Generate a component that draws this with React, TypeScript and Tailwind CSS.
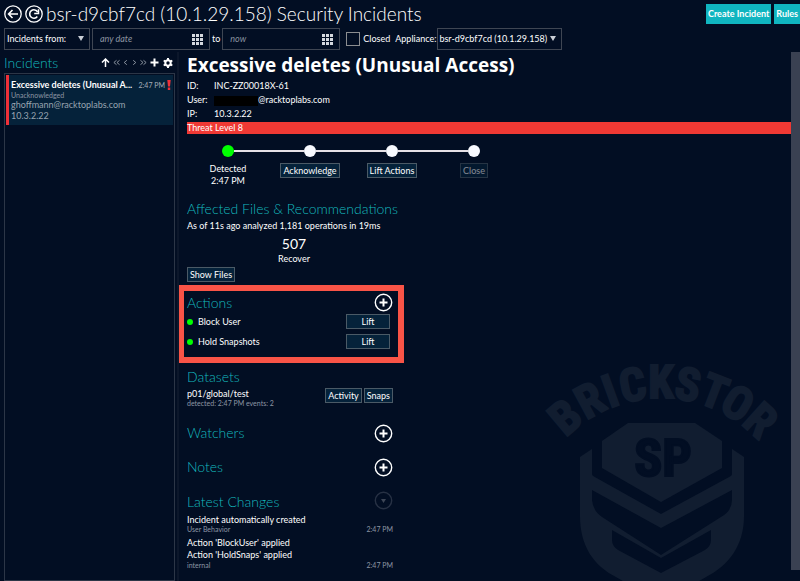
import React from "react";

const button =
  "flex h-[15px] cursor-pointer items-center justify-center whitespace-nowrap border border-[#4b5a66] bg-[#05223a] px-[2px] text-[9px] leading-[12px] text-white";
const heading = "text-[14px] font-light leading-[20px] text-[#14b8be]";
const meta = "text-[7px] leading-[8px] text-[#8d96a3]";

function PlusButton({ label }: { label: string }) {
  return (
    <button type="button" aria-label={label} className="size-[19px] shrink-0 cursor-pointer">
      <svg viewBox="0 0 19 19" className="size-full" fill="none" stroke="#fff">
        <circle cx="9.5" cy="9.5" r="8.2" strokeWidth="1.4" />
        <path d="M9.5 5.5v8M5.5 9.5h8" strokeWidth="2" />
      </svg>
    </button>
  );
}

function Triangle() {
  return (
    <svg viewBox="0 0 6 5" className="pointer-events-none absolute right-[6px] top-2 h-[5px] w-[6px]" fill="#c9ced6">
      <path d="M0 0h6L3 5z" />
    </svg>
  );
}

function DateField({ id, label, placeholder }: { id: string; label: string; placeholder: string }) {
  return (
    <div className="flex h-[22px] w-[118px] items-center border border-[#3f4653] pl-[7px] pr-[6px]">
      <input
        id={id}
        aria-label={label}
        placeholder={placeholder}
        className="w-full min-w-0 flex-1 bg-transparent text-[9px] italic text-white outline-none placeholder:text-[#8b93a0]"
      />
      <svg viewBox="0 0 11 11" className="size-[11px] shrink-0" fill="#d5d9df">
        {[0, 4, 8].map((y) => [0, 4, 8].map((x) => <rect key={`${x}-${y}`} x={x} y={y} width="3" height="3" />))}
      </svg>
    </div>
  );
}

const letters: [string, number][] = [
  ["B", -40], ["R", -28.5], ["I", -20], ["C", -11], ["K", 0], ["S", 10.5], ["T", 21], ["O", 31], ["R", 42],
];

function Watermark() {
  return (
    <svg
      viewBox="0 0 240 221"
      className="pointer-events-none absolute bottom-0 right-[10px] h-[221px] w-[240px] overflow-visible"
      fill="#111d30"
      aria-hidden="true"
    >
      <g fontFamily="'Roboto Condensed', Roboto, sans-serif" fontWeight="700" textAnchor="middle">
        {letters.map(([letter, angle], i) => (
          <text key={i} x="120" y="38" fontSize="46" stroke="#111d30" strokeWidth="2" transform={`rotate(${angle} 120 171)`}>
            {letter}
          </text>
        ))}
        <path d="M87 63h67l27 18v27l-61 34-59-34V81z" />
        <text x="122" y="116" fontSize="52" fill="#020e23" stroke="#020e23" strokeWidth="2">
          SP
        </text>
      </g>
      <path
        fillRule="evenodd"
        d="M39 97l12-8v25q0 1 1 2l68 38 70-38q1-1 1-2V89l12 8v59c0 30-16 50-38 61l-12 7H87l-12-7c-22-11-36-31-36-61z
           M51 130v10q1 11 10 17l59 38 60-38q11-6 11-17v-10l-71 38z
           M71 170v10q0 6 6 10l43 23 44-23q6-4 6-10v-10l-50 28z"
      />
    </svg>
  );
}

function Step({ first, last, done, children }: { first?: boolean; last?: boolean; done?: boolean; children: React.ReactNode }) {
  return (
    <li className="flex w-[82px] flex-col items-center">
      <div className="flex w-full items-center">
        <span className={first ? "h-[2px] flex-1" : "h-[2px] flex-1 bg-[#e6e1e6]"} />
        <span className={done ? "size-3 rounded-full bg-[#00ff00]" : "size-3 rounded-full bg-[#f8faff]"} />
        <span className={last ? "h-[2px] flex-1" : "h-[2px] flex-1 bg-[#e6e1e6]"} />
      </div>
      <div className="mt-[6px] text-center">{children}</div>
    </li>
  );
}

export default function App() {
  return (
    <div className="relative flex h-screen flex-col overflow-hidden bg-[#020e23] font-['Lato','Open_Sans',sans-serif] text-[9px] leading-[12px] text-white">
      <header className="flex h-[28px] shrink-0 items-center">
        <div className="flex items-center gap-[3px] pl-1">
          <button type="button" aria-label="Back" className="size-[18px] cursor-pointer">
            <svg viewBox="0 0 18 18" className="size-full" fill="none" stroke="#fff" strokeWidth="1.3">
              <circle cx="9" cy="9" r="8.2" />
              <path d="M14 9H5M8.5 5L4.6 9l3.9 4" strokeWidth="1.6" />
            </svg>
          </button>
          <button type="button" aria-label="Refresh" className="size-[18px] cursor-pointer">
            <svg viewBox="0 0 18 18" className="size-full" fill="none" stroke="#fff" strokeWidth="1.3">
              <circle cx="9" cy="9" r="8.2" />
              <path d="M12.3 11.5A4.2 4.2 0 1 1 12.6 7" strokeWidth="1.6" />
              <path d="M13.5 4.2v4.2H9.2" strokeWidth="1.5" />
            </svg>
          </button>
        </div>
        <h1 className="ml-[3px] flex-1 whitespace-nowrap text-[19px] font-light leading-[28px]">
          bsr-d9cbf7cd (10.1.29.158) Security Incidents
        </h1>
        <div className="flex gap-[3px]">
          <button type="button" className="h-5 cursor-pointer whitespace-nowrap bg-[#10b5c0] px-[2px] text-[9px] font-bold">
            Create Incident
          </button>
          <button type="button" className="h-5 cursor-pointer bg-[#10b5c0] px-[2px] text-[9px] font-bold">
            Rules
          </button>
        </div>
      </header>

      <div className="flex h-[24px] shrink-0 items-start pl-1">
        <div className="relative">
          <select
            aria-label="Incidents from"
            className="h-[22px] w-[86px] appearance-none border border-[#3f4653] bg-transparent pl-[2px] text-[9px] outline-none"
          >
            <option>Incidents from:</option>
          </select>
          <Triangle />
        </div>
        <div className="ml-[2px]">
          <DateField id="from" label="From date" placeholder="any date" />
        </div>
        <label htmlFor="to" className="px-[2px] leading-[22px]">
          to
        </label>
        <DateField id="to" label="To date" placeholder="now" />
        <label className="ml-[6px] flex items-center gap-[3px] leading-[22px]">
          <input type="checkbox" className="size-[14px] appearance-none border border-[#8b8d90] checked:bg-[#10b5c0]" />
          Closed
        </label>
        <label htmlFor="appliance" className="ml-[5px] mr-[1px] leading-[22px]">
          Appliance:
        </label>
        <div className="relative">
          <select
            id="appliance"
            className="h-[22px] w-[125px] appearance-none border border-[#3f4653] bg-transparent pl-[1px] text-[9px] outline-none"
          >
            <option>bsr-d9cbf7cd (10.1.29.158)</option>
          </select>
          <Triangle />
        </div>
      </div>

      <div className="flex min-h-0 flex-1">
        <aside className="flex w-[179px] shrink-0 flex-col border-r-2 border-[#0c172b] pl-1 pr-[2px]">
          <div className="flex h-[21px] shrink-0 items-center">
            <h2 className={`${heading} flex-1`}>Incidents</h2>
            <div className="flex items-center gap-[2px] pr-[2px] text-[#9aa2ae]">
              <button type="button" aria-label="Sort" className="mr-[1px] cursor-pointer">
                <svg viewBox="0 0 9 9" className="size-[9px]" fill="none" stroke="#fff" strokeWidth="1.5">
                  <path d="M4.5 9V1M1 4.5L4.5 1 8 4.5" />
                </svg>
              </button>
              {[
                ["First page", "M4 1L1 3.5 4 6M7.500 1l-3 2.500 3 2.500"],
                ["Previous page", "M5.500 1l-3 2.500 3 2.500"],
                ["Next page", "M2.500 1l3 2.500-3 2.500"],
                ["Last page", "M.5 1l3 2.500-3 2.500M4 1l3 2.500L4 6"],
              ].map(([label, d]) => (
                <button key={label} type="button" aria-label={label} className="cursor-pointer">
                  <svg viewBox="0 0 8 7" className="h-[7px] w-[7px]" fill="none" stroke="currentColor">
                    <path d={d} />
                  </svg>
                </button>
              ))}
              <button type="button" aria-label="Add" className="ml-[1px] cursor-pointer">
                <svg viewBox="0 0 9 9" className="size-[9px]" stroke="#fff" strokeWidth="2">
                  <path d="M4.500 .5v8M.5 4.500h8" />
                </svg>
              </button>
              <button type="button" aria-label="Settings" className="ml-[2px] cursor-pointer">
                <svg viewBox="0 0 10 10" className="size-[10px]" fill="none" stroke="#fff">
                  <circle cx="5" cy="5" r="2.700" strokeWidth="2" />
                  <path d="M5 0v2M5 8v2M.7 2.500l1.700 1M7.600 6.500l1.700 1M.7 7.500l1.700-1M7.600 3.500l1.700-1" strokeWidth="2" />
                </svg>
              </button>
            </div>
          </div>
          <ul className="min-h-0 flex-1 border border-[#2c3647] p-[1px]">
            <li className="border-l-[3px] border-[#ef3038] bg-[#05223a] pb-[3px] pl-[2px] pt-1">
              <div className="flex items-center">
                <strong className="min-w-0 flex-1 truncate text-[9px] leading-[12px]">Excessive deletes (Unusual A...</strong>
                <span className="ml-1 text-[7px] leading-[12px] text-[#a5adb8]">2:47 PM</span>
                <svg viewBox="0 0 4 10" className="ml-[2px] mr-[2px] h-[10px] w-1" fill="#ef3038">
                  <path d="M.3 0h3.400L3 6.500H1zM.8 7.500h2.400V10H.8z" />
                </svg>
              </div>
              <p className={meta}>Unacknowledged</p>
              <p className="text-[9px] leading-[11px] text-[#98a4b0]">ghoffmann@racktoplabs.com</p>
              <p className="text-[9px] leading-[12px] text-[#98a4b0]">10.3.2.22</p>
            </li>
          </ul>
        </aside>

        <main className="relative min-w-0 flex-1 overflow-hidden pl-2">
          <Watermark />
          <div className="relative">
            <h2 className="whitespace-nowrap font-['Open_Sans',sans-serif] text-[19px] font-bold leading-[27px]">
              Excessive deletes (Unusual Access)
            </h2>
            <dl className="grid grid-cols-[27px_1fr] leading-[14px]">
              <dt>ID:</dt>
              <dd>INC-ZZ00018X-61</dd>
              <dt>User:</dt>
              <dd className="flex items-center">
                <span className="mt-[2px] h-[10px] w-[44px] bg-black" />
                @racktoplabs.com
              </dd>
              <dt>IP:</dt>
              <dd>10.3.2.22</dd>
            </dl>
            <p className="mt-[1px] bg-[#f03934] leading-[12px]">Threat Level 8</p>

            <ol className="mt-[11px] flex">
              <Step first done>
                Detected
                <br />
                2:47 PM
              </Step>
              <Step>
                <button type="button" className={button}>Acknowledge</button>
              </Step>
              <Step>
                <button type="button" className={button}>Lift Actions</button>
              </Step>
              <Step last>
                <button type="button" disabled className={`${button} opacity-50`}>Close</button>
              </Step>
            </ol>

            <div className="w-[206px]">
              <section className="mt-3">
                <h3 className={`${heading} whitespace-nowrap`}>Affected Files &amp; Recommendations</h3>
                <p className="mt-[1px] whitespace-nowrap">As of 11s ago analyzed 1,181 operations in 19ms</p>
                <div className="mt-[3px] pl-2 text-center">
                  <p className="text-[14px] leading-[18px]">507</p>
                  <p>Recover</p>
                </div>
                <button type="button" className={`${button} mt-[2px]`}>Show Files</button>
              </section>

              <section className="-ml-[9px] mt-[3px] h-[78px] w-[226px] border-[6px] border-[#f95447] pl-[3px] pt-[1px]">
                <div className="flex w-[206px] items-center justify-between">
                  <h3 className={`${heading} pt-[1px]`}>Actions</h3>
                  <PlusButton label="Add action" />
                </div>
                <ul className="flex w-[203px] flex-col gap-[5px] pt-[1px]">
                  {["Block User", "Hold Snapshots"].map((name) => (
                    <li key={name} className="flex items-center">
                      <span className="size-[6px] rounded-full bg-[#00ff00]" />
                      <span className="ml-[5px] flex-1">{name}</span>
                      <button type="button" className={`${button} w-[44px]`}>Lift</button>
                    </li>
                  ))}
                </ul>
              </section>

              <section className="mt-1">
                <h3 className={heading}>Datasets</h3>
                <div className="flex gap-[2px] pt-[1px]">
                  <div className="flex-1">
                    <p className="leading-[11px]">p01/global/test</p>
                    <p className={meta}>detected: 2:47 PM events: 2</p>
                  </div>
                  <button type="button" className={button}>Activity</button>
                  <button type="button" className={button}>Snaps</button>
                </div>
              </section>

              <section className="mt-[9px] flex h-[34px] items-center justify-between">
                <h3 className={heading}>Watchers</h3>
                <PlusButton label="Add watcher" />
              </section>
              <section className="flex h-[34px] items-center justify-between">
                <h3 className={heading}>Notes</h3>
                <PlusButton label="Add note" />
              </section>
              <section>
                <div className="flex h-[28px] items-end justify-between">
                  <h3 className={heading}>Latest Changes</h3>
                  <button type="button" disabled aria-label="Filter changes" className="mb-[2px] size-[19px]">
                    <svg viewBox="0 0 19 19" className="size-full">
                      <circle cx="9.5" cy="9.5" r="8.2" fill="none" stroke="#273144" strokeWidth="1.4" />
                      <path d="M7 8h5l-2.500 4z" fill="#3d4656" />
                    </svg>
                  </button>
                </div>
                <p className="mt-[2px] leading-[11px]">Incident automatically created</p>
                <p className={`${meta} flex justify-between`}>
                  <span>User Behavior</span>
                  <span>2:47 PM</span>
                </p>
                <p className="mt-1 leading-[12px]">
                  Action 'BlockUser' applied
                  <br />
                  Action 'HoldSnaps' applied
                </p>
                <p className={`${meta} flex justify-between`}>
                  <span>internal</span>
                  <span>2:47 PM</span>
                </p>
              </section>
            </div>
          </div>
        </main>
        <div className="mb-[11px] w-[9px] shrink-0 bg-[#3a4152]" />
      </div>
    </div>
  );
}
